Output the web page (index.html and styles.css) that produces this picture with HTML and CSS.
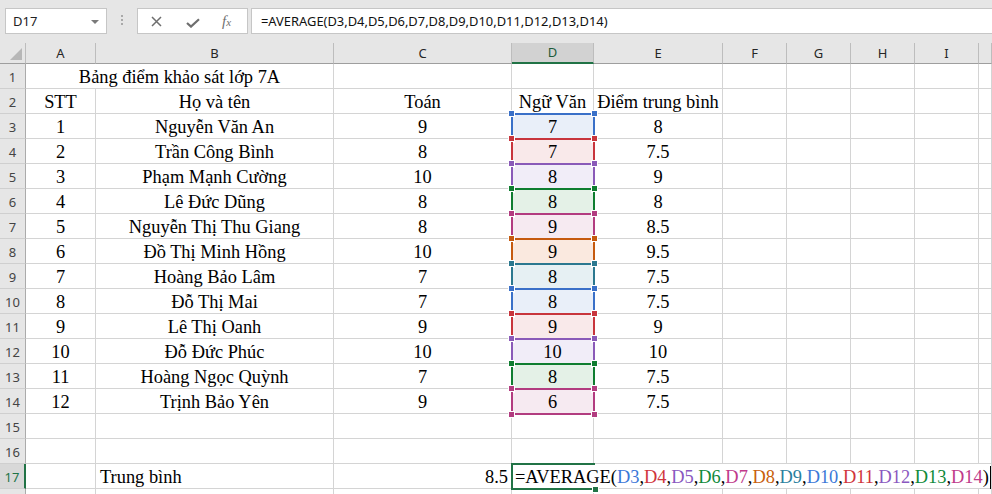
FILE: index.html
```html
<!DOCTYPE html>
<html lang="vi">
<head>
<meta charset="utf-8">
<title>Bảng điểm khảo sát lớp 7A</title>
<link rel="stylesheet" href="styles.css">
</head>
<body>
<div class="toolbar">
  <div class="namebox"><span>D17</span><span class="nb-arrow"></span></div>
  <div class="grip"><i></i><i></i><i></i></div>
  <div class="fxbox">
    <svg class="ic-x" width="11" height="11" viewBox="0 0 11 11"><path d="M1 1 L10 10 M10 1 L1 10" stroke="#6e6e6e" stroke-width="1.5" fill="none"/></svg>
    <svg class="ic-ok" width="14" height="10" viewBox="0 0 14 10"><path d="M1 5 L5 8.6 L13 1.2" stroke="#6e6e6e" stroke-width="2.2" fill="none"/></svg>
    <span class="fx">f<span class="fxs">x</span></span>
  </div>
  <div class="fbar">=AVERAGE(D3,D4,D5,D6,D7,D8,D9,D10,D11,D12,D13,D14)</div>
</div>

<div class="sheet">
  <div class="row hdr">
    <div class="corner"><svg width="12" height="12" viewBox="0 0 12 12"><path d="M12 0 L12 12 L0 12 Z" fill="#b7b7b7"/></svg></div>
    <div class="ch">A</div><div class="ch">B</div><div class="ch">C</div><div class="ch sel-col">D</div><div class="ch">E</div><div class="ch">F</div><div class="ch">G</div><div class="ch">H</div><div class="ch">I</div><div class="ch"></div>
  </div>

  <div class="row">
    <div class="rh">1</div>
    <div class="cell c span2">Bảng điểm khảo sát lớp 7A</div><div class="cell"></div><div class="cell"></div><div class="cell"></div><div class="cell"></div><div class="cell"></div><div class="cell"></div><div class="cell"></div><div class="cell"></div>
  </div>
  <div class="row">
    <div class="rh">2</div>
    <div class="cell c">STT</div><div class="cell c">Họ và tên</div><div class="cell c">Toán</div><div class="cell c">Ngữ Văn</div><div class="cell c">Điểm trung bình</div><div class="cell"></div><div class="cell"></div><div class="cell"></div><div class="cell"></div><div class="cell"></div>
  </div>
  <div class="row">
    <div class="rh">3</div>
    <div class="cell c">1</div><div class="cell c">Nguyễn Văn An</div><div class="cell c">9</div>
    <div class="cell c d k-blue">7<span class="rng"><i class="h tl"></i><i class="h tr"></i><i class="h bl"></i><i class="h br"></i></span></div>
    <div class="cell c">8</div><div class="cell"></div><div class="cell"></div><div class="cell"></div><div class="cell"></div><div class="cell"></div>
  </div>
  <div class="row">
    <div class="rh">4</div>
    <div class="cell c">2</div><div class="cell c">Trần Công Bình</div><div class="cell c">8</div>
    <div class="cell c d k-red">7<span class="rng"><i class="h tl"></i><i class="h tr"></i><i class="h bl"></i><i class="h br"></i></span></div>
    <div class="cell c">7.5</div><div class="cell"></div><div class="cell"></div><div class="cell"></div><div class="cell"></div><div class="cell"></div>
  </div>
  <div class="row">
    <div class="rh">5</div>
    <div class="cell c">3</div><div class="cell c">Phạm Mạnh Cường</div><div class="cell c">10</div>
    <div class="cell c d k-purple">8<span class="rng"><i class="h tl"></i><i class="h tr"></i><i class="h bl"></i><i class="h br"></i></span></div>
    <div class="cell c">9</div><div class="cell"></div><div class="cell"></div><div class="cell"></div><div class="cell"></div><div class="cell"></div>
  </div>
  <div class="row">
    <div class="rh">6</div>
    <div class="cell c">4</div><div class="cell c">Lê Đức Dũng</div><div class="cell c">8</div>
    <div class="cell c d k-green">8<span class="rng"><i class="h tl"></i><i class="h tr"></i><i class="h bl"></i><i class="h br"></i></span></div>
    <div class="cell c">8</div><div class="cell"></div><div class="cell"></div><div class="cell"></div><div class="cell"></div><div class="cell"></div>
  </div>
  <div class="row">
    <div class="rh">7</div>
    <div class="cell c">5</div><div class="cell c">Nguyễn Thị Thu Giang</div><div class="cell c">8</div>
    <div class="cell c d k-magenta">9<span class="rng"><i class="h tl"></i><i class="h tr"></i><i class="h bl"></i><i class="h br"></i></span></div>
    <div class="cell c">8.5</div><div class="cell"></div><div class="cell"></div><div class="cell"></div><div class="cell"></div><div class="cell"></div>
  </div>
  <div class="row">
    <div class="rh">8</div>
    <div class="cell c">6</div><div class="cell c">Đồ Thị Minh Hồng</div><div class="cell c">10</div>
    <div class="cell c d k-orange">9<span class="rng"><i class="h tl"></i><i class="h tr"></i><i class="h bl"></i><i class="h br"></i></span></div>
    <div class="cell c">9.5</div><div class="cell"></div><div class="cell"></div><div class="cell"></div><div class="cell"></div><div class="cell"></div>
  </div>
  <div class="row">
    <div class="rh">9</div>
    <div class="cell c">7</div><div class="cell c">Hoàng Bảo Lâm</div><div class="cell c">7</div>
    <div class="cell c d k-teal">8<span class="rng"><i class="h tl"></i><i class="h tr"></i><i class="h bl"></i><i class="h br"></i></span></div>
    <div class="cell c">7.5</div><div class="cell"></div><div class="cell"></div><div class="cell"></div><div class="cell"></div><div class="cell"></div>
  </div>
  <div class="row">
    <div class="rh">10</div>
    <div class="cell c">8</div><div class="cell c">Đỗ Thị Mai</div><div class="cell c">7</div>
    <div class="cell c d k-blue">8<span class="rng"><i class="h tl"></i><i class="h tr"></i><i class="h bl"></i><i class="h br"></i></span></div>
    <div class="cell c">7.5</div><div class="cell"></div><div class="cell"></div><div class="cell"></div><div class="cell"></div><div class="cell"></div>
  </div>
  <div class="row">
    <div class="rh">11</div>
    <div class="cell c">9</div><div class="cell c">Lê Thị Oanh</div><div class="cell c">9</div>
    <div class="cell c d k-red">9<span class="rng"><i class="h tl"></i><i class="h tr"></i><i class="h bl"></i><i class="h br"></i></span></div>
    <div class="cell c">9</div><div class="cell"></div><div class="cell"></div><div class="cell"></div><div class="cell"></div><div class="cell"></div>
  </div>
  <div class="row">
    <div class="rh">12</div>
    <div class="cell c">10</div><div class="cell c">Đỗ Đức Phúc</div><div class="cell c">10</div>
    <div class="cell c d k-purple">10<span class="rng"><i class="h tl"></i><i class="h tr"></i><i class="h bl"></i><i class="h br"></i></span></div>
    <div class="cell c">10</div><div class="cell"></div><div class="cell"></div><div class="cell"></div><div class="cell"></div><div class="cell"></div>
  </div>
  <div class="row">
    <div class="rh">13</div>
    <div class="cell c">11</div><div class="cell c">Hoàng Ngọc Quỳnh</div><div class="cell c">7</div>
    <div class="cell c d k-green">8<span class="rng"><i class="h tl"></i><i class="h tr"></i><i class="h bl"></i><i class="h br"></i></span></div>
    <div class="cell c">7.5</div><div class="cell"></div><div class="cell"></div><div class="cell"></div><div class="cell"></div><div class="cell"></div>
  </div>
  <div class="row">
    <div class="rh">14</div>
    <div class="cell c">12</div><div class="cell c">Trịnh Bảo Yên</div><div class="cell c">9</div>
    <div class="cell c d k-magenta">6<span class="rng"><i class="h tl"></i><i class="h tr"></i><i class="h bl"></i><i class="h br"></i></span></div>
    <div class="cell c">7.5</div><div class="cell"></div><div class="cell"></div><div class="cell"></div><div class="cell"></div><div class="cell"></div>
  </div>
  <div class="row">
    <div class="rh">15</div>
    <div class="cell"></div><div class="cell"></div><div class="cell"></div><div class="cell"></div><div class="cell"></div><div class="cell"></div><div class="cell"></div><div class="cell"></div><div class="cell"></div><div class="cell"></div>
  </div>
  <div class="row">
    <div class="rh">16</div>
    <div class="cell"></div><div class="cell"></div><div class="cell"></div><div class="cell"></div><div class="cell"></div><div class="cell"></div><div class="cell"></div><div class="cell"></div><div class="cell"></div><div class="cell"></div>
  </div>
  <div class="row">
    <div class="rh active">17</div>
    <div class="cell"></div><div class="cell l">Trung bình</div><div class="cell r">8.5</div>
    <div class="cell d edit-cell">
      <div class="edit">=AVERAGE(<span class="t-blue">D3</span>,<span class="t-red">D4</span>,<span class="t-purple">D5</span>,<span class="t-green">D6</span>,<span class="t-magenta">D7</span>,<span class="t-orange">D8</span>,<span class="t-teal">D9</span>,<span class="t-blue">D10</span>,<span class="t-red">D11</span>,<span class="t-purple">D12</span>,<span class="t-green">D13</span>,<span class="t-magenta">D14</span>)<span class="caret"></span></div>
      <span class="sel"><i class="h gbr"></i></span>
    </div>
    <div class="cell"></div><div class="cell"></div><div class="cell"></div><div class="cell"></div><div class="cell"></div><div class="cell"></div>
  </div>
  <div class="row">
    <div class="rh"></div>
    <div class="cell"></div><div class="cell"></div><div class="cell"></div><div class="cell"></div><div class="cell"></div><div class="cell"></div><div class="cell"></div><div class="cell"></div><div class="cell"></div><div class="cell"></div>
  </div>
</div>
</body>
</html>
```

FILE: styles.css
```css
* { box-sizing: border-box; margin: 0; padding: 0; }
html, body { width: 992px; height: 494px; overflow: hidden; background: #fff; }
body { font-family: "Noto Sans", "Open Sans", sans-serif; color: #222; }

/* ---------- formula toolbar ---------- */
.toolbar {
  height: 43px;
  background: #e6e6e6;
  display: flex;
  align-items: flex-start;
  padding: 8px 0 0 5px;
}
.namebox {
  width: 102px;
  height: 26px;
  background: #fff;
  border: 1px solid #c6c6c6;
  display: flex;
  align-items: center;
  justify-content: space-between;
  padding: 0 7px 0 7px;
  font-size: 13px;
  color: #222;
}
.nb-arrow {
  width: 0; height: 0;
  border-left: 4px solid transparent;
  border-right: 4px solid transparent;
  border-top: 4px solid #7a7a7a;
  margin-top: 1px;
}
.grip {
  margin-left: 14px;
  width: 2px;
  display: flex;
  flex-direction: column;
  gap: 2px;
  padding-top: 7px;
}
.grip i { display: block; width: 2px; height: 2px; background: #a9a9a9; }
.fxbox {
  margin-left: 14px;
  width: 111px;
  height: 26px;
  background: #fff;
  border: 1px solid #c6c6c6;
  display: flex;
  align-items: center;
  padding-left: 13px;
}
.ic-ok { margin-left: 24px; margin-top: 4px; }
.fx {
  margin-left: 22px;
  font-family: "Liberation Serif", serif;
  font-style: italic;
  font-size: 15px;
  color: #707070;
  line-height: 1;
}
.fxs { font-size: 11px; }
.fbar {
  margin-left: 3px;
  flex: 1;
  height: 26px;
  background: #fff;
  border: 1px solid #c6c6c6;
  border-right: none;
  padding-left: 9px;
  font-size: 12.9px;
  line-height: 24px;
  color: #111;
  white-space: nowrap;
}

/* ---------- sheet ---------- */
.sheet { position: relative; }
.row {
  display: grid;
  grid-template-columns: 26px 70px 238px 178px 82px 129px 64px 64px 64px 64px 13px;
  height: 25px;
}
.row.hdr { height: 21px; }

.corner {
  background: #e6e6e6;
  border-right: 1px solid #bdbdbd;
  border-bottom: 1px solid #9e9e9e;
  display: flex;
  align-items: flex-end;
  justify-content: flex-end;
  padding: 0 3px 3px 0;
}
.ch {
  background: #e6e6e6;
  border-right: 1px solid #bdbdbd;
  border-bottom: 1px solid #9e9e9e;
  font-size: 13px;
  color: #262626;
  text-align: center;
  line-height: 20px;
}
.ch.sel-col {
  background: #d2d2d2;
  border-bottom: 2px solid #217346;
  color: #1e5b3a;
  line-height: 19px;
}
.rh {
  background: #e6e6e6;
  border-right: 1px solid #ababab;
  border-bottom: 1px solid #cfcfcf;
  font-size: 13px;
  color: #444;
  text-align: center;
  line-height: 21px;
  padding-top: 3px;
}
.rh.active {
  background: #d8d8d8;
  border-right: 2px solid #217346;
  color: #217346;
}

.cell {
  border-right: 1px solid #d4d4d4;
  border-bottom: 1px solid #d4d4d4;
  font-family: "Liberation Serif", "Times New Roman", serif;
  font-size: 18.4px;
  line-height: 22px;
  padding-top: 2px;
  white-space: nowrap;
  color: #000;
  overflow: visible;
}
.cell.c { text-align: center; }
.cell.l { text-align: left; padding-left: 4px; }
.cell.r { text-align: right; padding-right: 3px; }
.cell.span2 { grid-column: span 2; }
.cell.d { position: relative; }

/* range colours */
.k-blue    { --c: #3a70c8; background: #e9eff9; }
.k-red     { --c: #c8353d; background: #f9e9ea; }
.k-purple  { --c: #8a5ab8; background: #f1edf8; }
.k-green   { --c: #0f7d30; background: #e4f1e7; }
.k-magenta { --c: #b23c80; background: #f6eaf1; }
.k-orange  { --c: #c55a0f; background: #fae9df; }
.k-teal    { --c: #2b788f; background: #e6f0f3; }

.rng {
  position: absolute;
  z-index: 1;
  left: -1px;
  top: -1px;
  width: 84px;
  height: 27px;
  border: 2px solid var(--c);
}
.h {
  position: absolute;
  width: 5px;
  height: 5px;
  background: var(--c);
  box-shadow: 0 0 0 1px #fff;
}
.h.tl { left: -4px; top: -4px; }
.h.tr { right: -4px; top: -4px; }
.h.bl { left: -4px; bottom: -4px; }
.h.br { right: -4px; bottom: -4px; }

/* active edit cell D17 */
.edit {
  position: absolute;
  z-index: 2;
  left: 0;
  top: 0;
  height: 24px;
  width: 479px;
  background: #fff;
  padding: 2px 0 0 3px;
  line-height: 22px;
  white-space: nowrap;
  color: #000;
}
.sel {
  position: absolute;
  z-index: 3;
  left: -1px;
  top: -1px;
  width: 84px;
  height: 27px;
  border: 2px solid #217346;
  border-right: none;
}
.h.gbr { --c: #217346; right: -3px; bottom: -4px; }
.caret {
  display: inline-block;
  width: 1px;
  height: 23px;
  background: #000;
  vertical-align: -6px;
  margin-left: 1px;
}
.t-blue    { color: #3b78d8; }
.t-red     { color: #d0343c; }
.t-purple  { color: #8a58c0; }
.t-green   { color: #0f8a3a; }
.t-magenta { color: #c03a8a; }
.t-orange  { color: #c8600c; }
.t-teal    { color: #2a7f9e; }
```
